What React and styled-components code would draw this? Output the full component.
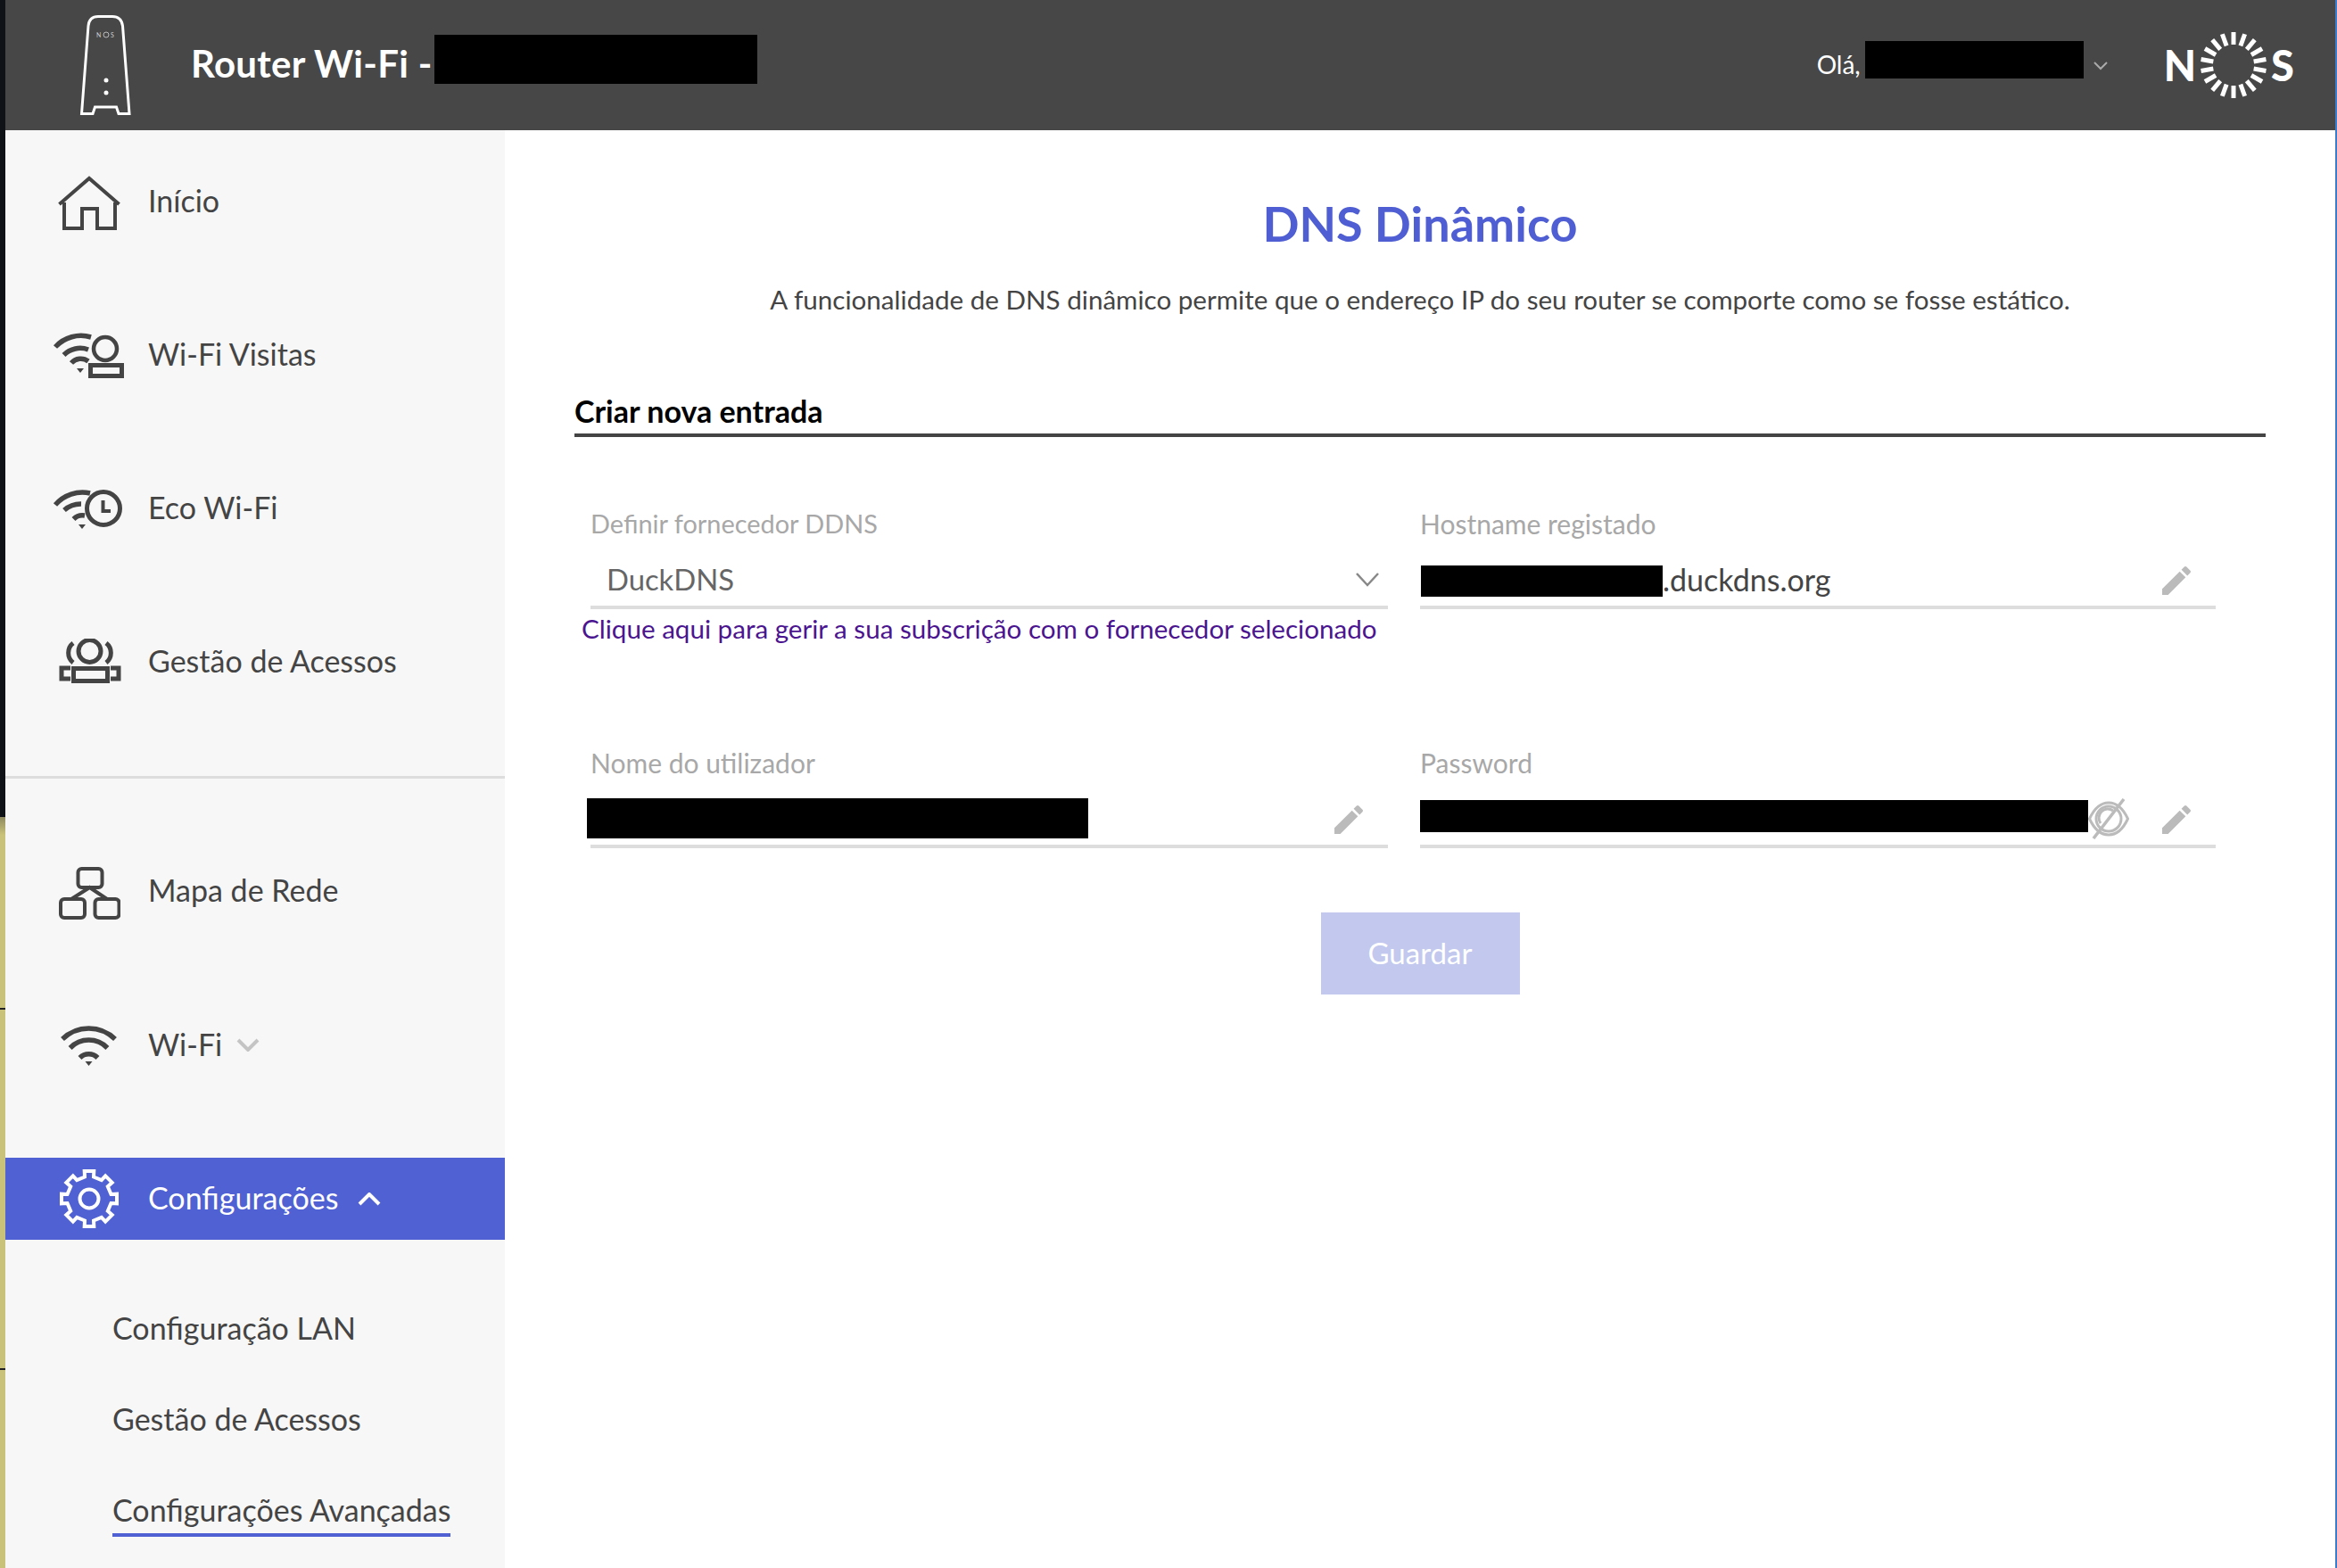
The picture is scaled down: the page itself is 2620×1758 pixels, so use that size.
import React from "react";
import styled, { createGlobalStyle } from "styled-components";

const FONT = `Lato, "Open Sans", sans-serif`;

const GlobalStyle = createGlobalStyle`
	html, body {
		margin: 0;
		padding: 0;
		background: #fff;
		font-family: ${FONT};
	}
	* {
		box-sizing: border-box;
	}
`;

const navTop = [
	{ label: "Início", icon: <HomeIcon />, drop: 4 },
	{ label: "Wi-Fi Visitas", icon: <GuestWifiIcon />, drop: 4 },
	{ label: "Eco Wi-Fi", icon: <EcoWifiIcon />, drop: 4 },
	{ label: "Gestão de Acessos", icon: <AccessIcon />, drop: 0 },
];

function App() {
	return (
		<>
			<GlobalStyle />
			<Page>
				<DesktopEdge>
					<EdgeDark />
					<EdgeDesk>
						<EdgeLine />
						<EdgeLine />
					</EdgeDesk>
				</DesktopEdge>
				<Window>
					<Header>
						<RouterIcon />
						<HeaderTitle>Router Wi-Fi -</HeaderTitle>
						<Redact $w={362} $h={55} $lift={13} $left={2} />
						<UserMenu>
							<Hello>Olá,</Hello>
							<Redact $w={245} $h={42} $lift={12} $left={5} />
							<SmallChevron />
						</UserMenu>
						<Logo>
							<LogoLetter>N</LogoLetter>
							<SunMark />
							<LogoLetter>S</LogoLetter>
						</Logo>
					</Header>
					<Body>
						<Sidebar>
							<NavGroup>
								{navTop.map((item) => (
									<NavItem key={item.label}>
										<IconSlot $drop={item.drop}>{item.icon}</IconSlot>
										<NavLabel>{item.label}</NavLabel>
									</NavItem>
								))}
							</NavGroup>
							<Divider />
							<NavGroup $second>
								<NavItem>
									<IconSlot $drop={4}>
										<MapIcon />
									</IconSlot>
									<NavLabel>Mapa de Rede</NavLabel>
								</NavItem>
								<NavItem>
									<IconSlot $drop={0}>
										<WifiIcon />
									</IconSlot>
									<NavLabel>Wi-Fi</NavLabel>
									<NavChevron $color="#c4c4c4" $gap={16}>
										<path d="M2 2l11 11L24 2" />
									</NavChevron>
								</NavItem>
								<NavItem $active>
									<IconSlot $drop={0}>
										<GearIcon />
									</IconSlot>
									<NavLabel>Configurações</NavLabel>
									<NavChevron $color="#fff" $gap={22}>
										<path d="M2 13L13 2l11 11" />
									</NavChevron>
								</NavItem>
							</NavGroup>
							<SubNav>
								<SubItem>Configuração LAN</SubItem>
								<SubItem>Gestão de Acessos</SubItem>
								<SubItem $active>Configurações Avançadas</SubItem>
							</SubNav>
						</Sidebar>
						<Main>
							<PageTitle>DNS Dinâmico</PageTitle>
							<Description>
								A funcionalidade de DNS dinâmico permite que o endereço IP do seu router se
								comporte como se fosse estático.
							</Description>
							<SectionTitle>Criar nova entrada</SectionTitle>
							<FormGrid>
								<Field>
									<FieldLabel $thin>Definir fornecedor DDNS</FieldLabel>
									<Control>
										<SelectValue>DuckDNS</SelectValue>
										<SelectChevron />
									</Control>
									<ProviderLink>
										Clique aqui para gerir a sua subscrição com o fornecedor selecionado
									</ProviderLink>
								</Field>
								<Field>
									<FieldLabel>Hostname registado</FieldLabel>
									<Control>
										<Redact $w={271} $h={35} $lift={11} $left={1} />
										<Value>.duckdns.org</Value>
										<PencilIcon />
									</Control>
								</Field>
								<Field>
									<FieldLabel>Nome do utilizador</FieldLabel>
									<Control>
										<Redact $w={562} $h={45} $lift={15} $left={-4} />
										<PencilIcon />
									</Control>
								</Field>
								<Field>
									<FieldLabel>Password</FieldLabel>
									<Control>
										<Redact $w={749} $h={36} $lift={20} $left={0} />
										<EyeOffIcon />
										<PencilIcon />
									</Control>
								</Field>
							</FormGrid>
							<SaveButton disabled>Guardar</SaveButton>
						</Main>
					</Body>
				</Window>
				<DesktopSliver />
			</Page>
		</>
	);
}

export default App;

function RouterIcon() {
	return (
		<RouterSvg viewBox="0 0 60 116" fill="none" stroke="#fff" strokeWidth="3">
			<path d="M3.5 112.5L11 14Q12 3.5 22 3.5H38Q48 3.5 49.5 14L57 112.5H45L42.5 105H18.5L16 112.5Z" />
			<circle cx="31" cy="75" r="2.5" fill="#fff" stroke="none" />
			<circle cx="31" cy="89" r="2.5" fill="#fff" stroke="none" />
			<circle cx="31" cy="24" r="3" stroke="#bbb" strokeWidth="1" />
			<TinyMark x="20" y="26.5">N</TinyMark>
			<TinyMark x="36" y="26.5">S</TinyMark>
		</RouterSvg>
	);
}

function SunMark() {
	const rays = Array.from({ length: 18 }, (_, i) => i * 20);
	return (
		<SunSvg viewBox="-38 -38 76 76" stroke="#fff" strokeWidth="5">
			{rays.map((deg) => (
				<line key={deg} x1="0" y1="-23" x2="0" y2="-37" transform={`rotate(${deg})`} />
			))}
		</SunSvg>
	);
}

function SmallChevron() {
	return (
		<ChevronSvg viewBox="0 0 16 10" fill="none" stroke="#aaa" strokeWidth="2">
			<path d="M1 1l7 7 7-7" />
		</ChevronSvg>
	);
}

function HomeIcon() {
	return (
		<svg width="70" height="62" viewBox="0 0 70 62" fill="none" stroke="#444" strokeWidth="4">
			<path d="M1.5 32L35 3l33.5 29" />
			<path d="M7 30V59H27V37H44V59H64V30" />
		</svg>
	);
}

function GuestWifiIcon() {
	return (
		<svg width="82" height="56" viewBox="0 0 82 56" fill="none" stroke="#444" strokeWidth="5.5">
			<path d="M3 17A39 39 0 0 1 43 6" />
			<path d="M12.5 26A26 26 0 0 1 40 20" />
			<path d="M21 35A14 14 0 0 1 40 33" />
			<path d="M27 41h8l-4 5z" fill="#444" stroke="none" />
			<circle cx="59" cy="19" r="13" strokeWidth="4.5" />
			<rect x="42.5" y="37.5" width="35" height="12" strokeWidth="5" />
		</svg>
	);
}

function EcoWifiIcon() {
	return (
		<svg width="82" height="56" viewBox="0 0 82 56" fill="none" stroke="#444" strokeWidth="5.5">
			<path d="M3 22A40 40 0 0 1 42 9" />
			<path d="M13 28A28 28 0 0 1 32 21" />
			<path d="M23.5 38A14 14 0 0 1 36 34" />
			<path d="M29 44h8l-4 5z" fill="#444" stroke="none" />
			<circle cx="57" cy="26" r="18.5" strokeWidth="5" />
			<path d="M56.5 17V29H65" strokeWidth="4" />
		</svg>
	);
}

function AccessIcon() {
	return (
		<svg width="72" height="52" viewBox="0 0 72 52" fill="none" stroke="#444" strokeWidth="5">
			<circle cx="36.5" cy="14" r="12.5" />
			<path d="M18 5A14 14 0 0 0 18 27" />
			<path d="M55 5A14 14 0 0 1 55 27" />
			<rect x="18.5" y="33.5" width="38" height="14" />
			<path d="M15 33H5V45H15" />
			<path d="M60 33H69V45H60" />
		</svg>
	);
}

function MapIcon() {
	return (
		<svg width="70" height="60" viewBox="0 0 70 60" fill="none" stroke="#444" strokeWidth="4">
			<rect x="22.5" y="3" width="27" height="21" rx="4" />
			<rect x="3" y="37" width="27" height="21" rx="4" />
			<rect x="41.5" y="37" width="27" height="21" rx="4" />
			<path d="M15 37L35.5 24L55 37" />
		</svg>
	);
}

function WifiIcon() {
	return (
		<svg width="72" height="50" viewBox="0 0 72 50" fill="none" stroke="#444" strokeWidth="5.5">
			<path d="M6 18A42 42 0 0 1 65 18" />
			<path d="M14.6 28A29 29 0 0 1 56.4 28" />
			<path d="M25.5 39A14 14 0 0 1 45.5 39" />
			<path d="M31.5 43h8l-4 5z" fill="#444" stroke="none" />
		</svg>
	);
}

// eight toothed cog, the points are worked out once instead of typed by hand
const gearPoints = (() => {
	const pts = [];
	for (let i = 0; i < 8; i++) {
		const a = (i * Math.PI) / 4;
		[
			[-0.2, 25],
			[-0.17, 31.5],
			[0.17, 31.5],
			[0.2, 25],
		].forEach(([da, r]) => {
			pts.push(`${(r * Math.sin(a + da)).toFixed(1)},${(-r * Math.cos(a + da)).toFixed(1)}`);
		});
	}
	return pts.join(" ");
})();

function GearIcon() {
	return (
		<svg width="70" height="70" viewBox="-35 -35 70 70" fill="none" stroke="#fff" strokeWidth="4">
			<polygon points={gearPoints} />
			<circle r="10.5" />
		</svg>
	);
}

function SelectChevron() {
	return (
		<SelectChevronSvg viewBox="0 0 26 16" fill="none" stroke="#888" strokeWidth="2.5">
			<path d="M1 1l12 13L25 1" />
		</SelectChevronSvg>
	);
}

function PencilIcon() {
	return (
		<PencilSvg viewBox="3 3 18 18" fill="#bbb">
			<path d="M3 17.25V21h3.75L17.81 9.94l-3.75-3.75L3 17.25zM20.71 7.04c.39-.39.39-1.02 0-1.41l-2.34-2.34c-.39-.39-1.02-.39-1.41 0l-1.83 1.83 3.75 3.75 1.83-1.83z" />
		</PencilSvg>
	);
}

function EyeOffIcon() {
	return (
		<EyeSvg viewBox="0 0 46 46" fill="none" stroke="#bbb" strokeWidth="3">
			<path d="M1.5 23C8 9 15 5 23 5s15 4 21.5 18C38 37 31 41 23 41S8 37 1.5 23Z" />
			<circle cx="23" cy="23" r="14" />
			<path d="M14 28A10 10 0 0 1 28 14" />
			<path d="M40 1L6 45" strokeWidth="3.5" />
		</EyeSvg>
	);
}

const Page = styled.div`
	display: flex;
	width: 2620px;
	height: 1758px;
	overflow: hidden;
	background: #fff;
`;

const DesktopEdge = styled.div`
	display: flex;
	flex-direction: column;
	width: 6px;
	flex-shrink: 0;
`;

const EdgeDark = styled.div`
	height: 916px;
	background: #0f1216;
`;

const EdgeDesk = styled.div`
	flex: 1;
	padding-top: 214px;
	background: linear-gradient(#8f8a60, #c9c27a 20px);

	display: flex;
	flex-direction: column;
	gap: 402px;
`;

const EdgeLine = styled.div`
	height: 2px;
	background: #222;
`;

const DesktopSliver = styled.div`
	width: 2px;
	flex-shrink: 0;
	background: #3d7cc9;
`;

const Window = styled.div`
	flex: 1;
	display: flex;
	flex-direction: column;
	min-width: 0;
`;

const Header = styled.header`
	display: flex;
	align-items: center;
	height: 146px;
	flex-shrink: 0;
	padding: 0 46px 0 82px;
	background: #474747;
	color: #fff;
`;

const RouterSvg = styled.svg`
	width: 60px;
	height: 116px;
	margin-right: 66px;
	flex-shrink: 0;
`;

const TinyMark = styled.text`
	font-family: ${FONT};
	font-size: 7px;
	fill: #ccc;
	stroke: none;
`;

const HeaderTitle = styled.div`
	font-size: 42px;
	font-weight: 700;
	line-height: 50px;
	letter-spacing: 0.3px;
	margin-top: -4px;
	white-space: nowrap;
`;

const Redact = styled.div`
	width: ${(p) => p.$w}px;
	height: ${(p) => p.$h}px;
	margin-left: ${(p) => p.$left}px;
	margin-bottom: ${(p) => p.$lift}px;
	flex-shrink: 0;
	background: #000;
`;

const UserMenu = styled.div`
	display: flex;
	align-items: center;
	margin-left: auto;
	margin-right: 63px;
`;

const Hello = styled.span`
	font-size: 28px;
	font-weight: 400;
	padding-bottom: 2px;
`;

const ChevronSvg = styled.svg`
	width: 16px;
	height: 10px;
	margin-left: 11px;
	margin-top: 2px;
`;

const Logo = styled.div`
	display: flex;
	align-items: center;
`;

const LogoLetter = styled.span`
	font-size: 47px;
	font-weight: 900;
	line-height: 1;
`;

const SunSvg = styled.svg`
	width: 76px;
	height: 76px;
	margin: 0 4px;
`;

const Body = styled.div`
	flex: 1;
	display: flex;
	min-height: 0;
`;

const Sidebar = styled.aside`
	width: 560px;
	flex-shrink: 0;
	padding-top: 34px;
	background: #f7f7f7;
`;

const NavGroup = styled.div`
	display: flex;
	flex-direction: column;
	gap: ${(p) => (p.$second ? "80.5px" : "80px")};
`;

const NavItem = styled.div`
	display: flex;
	align-items: center;
	height: 92px;
	font-size: 34px;
	color: ${(p) => (p.$active ? "#fff" : "#444")};
	background: ${(p) => (p.$active ? "#5061d3" : "transparent")};
`;

const NavLabel = styled.span`
	padding-bottom: 3px;
`;

const IconSlot = styled.span`
	display: flex;
	align-items: center;
	justify-content: center;
	width: 84px;
	margin: 0 24px 0 52px;
	padding-top: ${(p) => p.$drop}px;
`;

const NavChevron = styled.svg.attrs({ viewBox: "0 0 26 15", fill: "none", strokeWidth: 4 })`
	width: 26px;
	height: 15px;
	margin-left: ${(p) => p.$gap}px;
	stroke: ${(p) => p.$color};
`;

const Divider = styled.div`
	height: 3px;
	margin: 82px 0 80px;
	background: #ddd;
`;

const SubNav = styled.div`
	display: flex;
	flex-direction: column;
	align-items: flex-start;
	gap: 62px;
	padding: 79px 0 0 120px;
`;

const SubItem = styled.div`
	font-size: 34px;
	line-height: 40px;
	color: #444;
	padding-bottom: ${(p) => (p.$active ? "6px" : "0")};
	border-bottom: ${(p) => (p.$active ? "4px solid #5061d3" : "none")};
`;

const Main = styled.main`
	flex: 1;
	display: flex;
	flex-direction: column;
	padding: 70px 78px 0;
	min-width: 0;
`;

const PageTitle = styled.h1`
	margin: 0;
	font-size: 54px;
	font-weight: 700;
	line-height: 70px;
	text-align: center;
	color: #4f5fd3;
`;

const Description = styled.p`
	margin: 29px 0 0;
	font-size: 29.6px;
	line-height: 42px;
	text-align: center;
	color: #444;
`;

const SectionTitle = styled.h2`
	margin: 85px 0 0;
	height: 48px;
	padding-bottom: 4px;
	border-bottom: 4px solid #444;
	font-size: 34px;
	font-weight: 700;
	line-height: 37px;
	color: #000;
`;

const FormGrid = styled.div`
	display: grid;
	grid-template-columns: 894px 892px;
	column-gap: 36px;
	row-gap: 115px;
	margin-top: 80px;
	padding-left: 18px;
`;

const Field = styled.div`
	display: flex;
	flex-direction: column;
	min-width: 0;
`;

const FieldLabel = styled.label`
	font-size: ${(p) => (p.$thin ? "28.9px" : "30px")};
	line-height: 34px;
	color: #a8a8a8;
`;

const Control = styled.div`
	display: flex;
	align-items: center;
	height: 48px;
	margin-top: 31px;
	border-bottom: 4px solid #ddd;
`;

const SelectValue = styled.span`
	padding: 0 0 16px 18px;
	font-size: 32.8px;
	color: #666;
`;

const SelectChevronSvg = styled.svg`
	width: 26px;
	height: 16px;
	margin: 0 10px 14px auto;
`;

const Value = styled.span`
	padding-bottom: 15px;
	font-size: 34px;
	color: #444;
`;

const PencilSvg = styled.svg`
	width: 32px;
	height: 32px;
	margin: 0 28px 12px auto;
	flex-shrink: 0;
`;

const EyeSvg = styled.svg`
	width: 46px;
	height: 46px;
	margin-bottom: 14px;
	flex-shrink: 0;
`;

const ProviderLink = styled.a`
	margin: 4px 0 0 -10px;
	font-size: 29.6px;
	line-height: 36px;
	white-space: nowrap;
	color: #4b1590;
`;

const SaveButton = styled.button`
	align-self: center;
	width: 223px;
	height: 92px;
	margin-top: 72px;
	padding-bottom: 3px;
	border: none;
	background: #c2c8ee;
	color: #fff;
	font-family: ${FONT};
	font-size: 33px;
`;
